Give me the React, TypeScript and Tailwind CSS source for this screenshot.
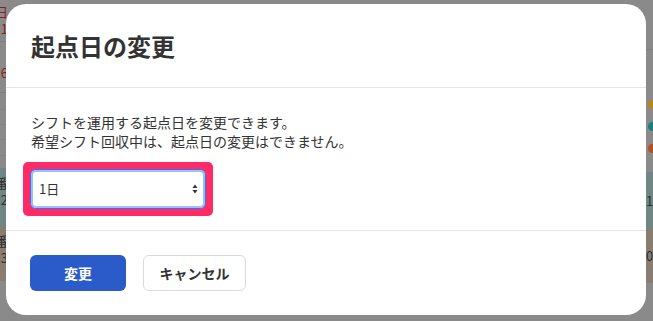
import React from "react";

const font = { fontFamily: '"Noto Sans CJK JP", "Noto Sans", sans-serif' };

const App: React.FC = () => {
  return (
    <div className="relative w-[653px] h-[321px] overflow-hidden bg-[#8a8a8a]" style={font}>
      {/* Calendar behind the overlay */}
      <div className="flex justify-between h-full">
        <div className="w-[24px] -ml-[16px] flex flex-col text-[13px] leading-[17px]">
          <div className="h-[42px] border-b border-[#7e7e7e] pt-[3px] text-[#8e1b22] text-right">
            <div>日</div>
            <div>71</div>
          </div>
          <div className="h-[51px] border-b border-[#7e7e7e] pt-[22px] text-[#8e1b22] text-right">6</div>
          <div className="h-[17px] border-b border-[#838383]" />
          <div className="h-[15px] border-b border-[#838383]" />
          <div className="h-[15px] border-b border-[#838383]" />
          <div className="h-[16px] border-b border-[#838383]" />
          <div className="h-[12px]" />
          <div className="h-[58px] bg-[#6f8784] pt-[6px] text-[#2f2f2f] text-right">
            <div>番</div>
            <div>2</div>
          </div>
          <div className="h-[55px] bg-[#897d70] pt-[6px] text-[#2f2f2f] text-right">
            <div>番</div>
            <div>3</div>
          </div>
        </div>
        <div className="w-[20px] -mr-[12px] flex flex-col text-[13px] leading-[17px]">
          <div className="h-[50px] border-b border-[#7e7e7e]" />
          <div className="h-[122px] flex flex-col gap-[13px] pt-[50px] pl-[3px]">
            <span className="w-[9px] h-[9px] rounded-full bg-[#b38918]" />
            <span className="w-[9px] h-[9px] rounded-full bg-[#187f80]" />
            <span className="w-[9px] h-[9px] rounded-full bg-[#b2521d]" />
          </div>
          <div className="h-[56px] bg-[#6f8784] flex items-center pl-[1px] text-[#2f2f2f]">1</div>
          <div className="h-[55px] bg-[#897d70] flex items-center pl-[1px] text-[#2f2f2f]">0</div>
        </div>
      </div>

      {/* Modal */}
      <div className="absolute left-[6px] top-[4px] w-[640px] h-[311px] bg-white rounded-[20px] flex flex-col overflow-hidden">
        <div className="h-[84px] flex items-center px-[25px] border-b border-[#e5e5e5]">
          <h1 className="text-[24px] font-bold text-[#333333] leading-none">起点日の変更</h1>
        </div>

        <div className="h-[143px] px-[25px] pt-[25px] border-b border-[#e5e5e5]">
          <p className="text-[14px] leading-[19px] text-[#333333]">
            シフトを運用する起点日を変更できます。
            <br />
            希望シフト回収中は、起点日の変更はできません。
          </p>
          <div className="mt-[11px] -ml-[8px] inline-flex p-[7px] rounded-[5px] bg-[#ff2b67]">
            <div className="w-[176px] h-[40px] bg-white rounded-[6px] border border-[#3d6ef0] shadow-[inset_0_0_0_2px_#96c1fa] flex items-center justify-between pl-[8px] pr-[7px]">
              <span className="text-[13px] text-[#333333]">1日</span>
              <svg width="6" height="10" viewBox="0 0 6 10">
                <path d="M3 0.5 L5.5 4 H0.5 Z" fill="#333333" />
                <path d="M3 9.5 L5.5 6 H0.5 Z" fill="#333333" />
              </svg>
            </div>
          </div>
        </div>

        <div className="flex-1 flex items-center gap-[17px] px-[24px]">
          <button className="w-[96px] h-[36px] rounded-[6px] bg-[#2a5bc8] text-white text-[14px] font-bold">
            変更
          </button>
          <button className="w-[103px] h-[36px] rounded-[6px] bg-white border border-[#d9d9d9] text-[#333333] text-[14px] font-bold">
            キャンセル
          </button>
        </div>
      </div>
    </div>
  );
};

export default App;
